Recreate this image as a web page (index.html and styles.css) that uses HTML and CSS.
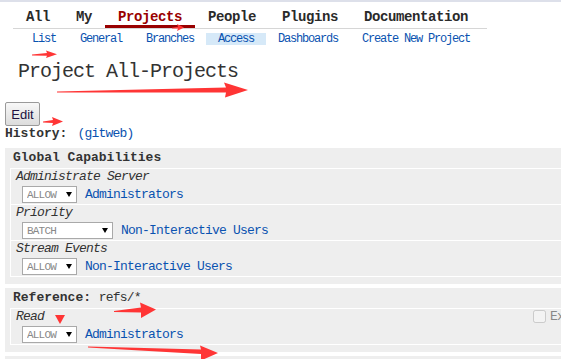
FILE: index.html
```html
<!DOCTYPE html>
<html lang="en">

<head>
  <meta charset="UTF-8">
  <title>Project All-Projects</title>
  <link rel="stylesheet" href="styles.css">
</head>

<body>
  <div class="page">
    <div class="topnav">
      <a class="tab">All</a>
      <a class="tab">My</a>
      <a class="tab selected">Projects</a>
      <a class="tab">People</a>
      <a class="tab">Plugins</a>
      <a class="tab">Documentation</a>
    </div>

    <div class="subnav">
      <a>List</a>
      <a>General</a>
      <a>Branches</a>
      <a class="active">Access</a>
      <a>Dashboards</a>
      <a>Create New Project</a>
    </div>

    <h1 class="title">Project All-Projects</h1>

    <button class="edit">Edit</button>
    <div class="history"><b>History:</b> <a class="link gitweb">(gitweb)</a></div>

    <div class="section">
      <h3>Global Capabilities</h3>
      <div class="perms">
        <div class="perm">
          <div class="perm-head"><i>Administrate Server</i></div>
          <div class="rule">
            <span class="pick"><select class="narrow"><option>ALLOW</option></select></span>
            <a class="link">Administrators</a>
          </div>
        </div>
        <div class="perm">
          <div class="perm-head"><i>Priority</i></div>
          <div class="rule">
            <span class="pick"><select class="wide"><option>BATCH</option></select></span>
            <a class="link">Non-Interactive Users</a>
          </div>
        </div>
        <div class="perm">
          <div class="perm-head"><i>Stream Events</i></div>
          <div class="rule">
            <span class="pick"><select class="narrow"><option>ALLOW</option></select></span>
            <a class="link">Non-Interactive Users</a>
          </div>
        </div>
      </div>
    </div>

    <div class="section">
      <h3>Reference: <span class="refname">refs/*</span></h3>
      <div class="perms">
        <div class="perm">
          <div class="perm-head">
            <i>Read</i>
            <label class="exclusive"><input type="checkbox" disabled>Exclusive</label>
          </div>
          <div class="rule">
            <span class="pick"><select class="narrow"><option>ALLOW</option></select></span>
            <a class="link">Administrators</a>
          </div>
        </div>
      </div>
    </div>

    <!-- next section starts just below the fold -->
    <div class="section empty"></div>
  </div>

  <!-- red arrows drawn over the screenshot -->
  <svg class="marks" width="561" height="359" viewBox="0 0 561 359">
    <polygon points="172,25.8 178,24.8 177,22 184,25.5 177,29 178,26.6 172,26.4" />
    <polygon points="32,52.6 47,51 46,48.5 57,52.2 46,56 47,53.8 32,53.4" />
    <polygon points="57,89.5 226,85.5 224,80.5 248,88 225,95.5 226,90.5 57,90.5" />
    <polygon points="43,119.6 53,118 52,115 63,119.5 52,124 53,121 43,120.4" />
    <polygon points="114,309 141,305.5 140,300.5 156,307.5 141,316 141,310.5 114,310" />
    <polygon points="55,313 65,313 60,322" />
    <polygon points="88,344.6 201,347.5 200,343.5 218,351 201,358.5 201,352 88,345.6" />
  </svg>
</body>

</html>
```

FILE: styles.css
```css
html,
body {
  overflow: hidden;
}

body {
  margin: 0;
  position: relative;
  border-top: 2px solid #dde0ea;
  color: #333;
  font-family: 'Liberation Mono', 'DejaVu Sans Mono', monospace;
  font-size: 13px;
  letter-spacing: -0.8px;
}

.page {
  padding-left: 5px;
}

.link,
.subnav a {
  color: #0a52b0;
  text-decoration: none;
}

/* top tabs */
.topnav {
  display: inline-flex;
  margin: 8px 0 0 8px;
  padding-right: 6px;
  border-bottom: 1px solid #d6d6d6;
}

.tab {
  padding: 0 13px;
  line-height: 15px;
  font-size: 14px;
  font-weight: bold;
  letter-spacing: -0.4px;
  color: #2a2a2a;
  border-bottom: 3px solid transparent;
}

.tab.selected {
  color: #990000;
  border-bottom-color: #990000;
}

/* second row of links */
.subnav {
  display: flex;
  margin: 4px 0 0 15px;
}

.subnav a {
  padding: 0 12px;
  line-height: 12px;
  font-size: 12px;
  letter-spacing: -1.2px;
}

.subnav a.active {
  background: #d6e9f8;
}

.title {
  margin: 15px 0 0 13px;
  font-size: 20px;
  line-height: 24px;
  font-weight: normal;
  letter-spacing: -1px;
  color: #333;
}

.edit {
  display: block;
  width: 35px;
  height: 24px;
  margin-top: 18px;
  padding: 0;
  font-family: 'Liberation Sans', Arial, sans-serif;
  font-size: 13px;
  letter-spacing: 0;
  color: #201040;
  border: 1px solid #9a9a9a;
  border-radius: 2px;
  background: linear-gradient(#f8f8f8, #dcdcdc);
}

.history {
  margin-top: 1px;
  line-height: 13px;
}

.history b,
.section h3 {
  letter-spacing: 0;
}

.gitweb {
  margin-left: 3px;
}

/* access sections */
.section {
  width: 612px;
  margin-top: 8px;
  padding: 2px 0 7px;
  background: #eee;
}

.section + .section {
  margin-top: 4px;
}

.section.empty {
  height: 40px;
}

.section h3 {
  margin: 0;
  padding-left: 8px;
  font-size: 13px;
  line-height: 16px;
}

.refname {
  font-weight: normal;
  letter-spacing: -0.8px;
}

.perms {
  margin: 2px 0 0 5px;
  border-top: 1px solid #fff;
  border-left: 1px solid #fff;
}

.perm {
  padding: 1px 4px 1px 5px;
  border-bottom: 1px solid #fff;
}

.perm-head {
  display: flex;
  align-items: center;
  line-height: 13px;
}

.exclusive {
  display: flex;
  align-items: center;
  margin-left: auto;
  color: #888;
}

.exclusive input {
  width: 13px;
  height: 13px;
  margin: 0 4px 0 0;
}

.rule {
  display: flex;
  align-items: center;
  margin: 3px 0 0 6px;
}

.rule .link {
  margin-left: 8px;
}

.pick {
  position: relative;
  display: block;
}

.pick select {
  display: block;
  -webkit-appearance: none;
  appearance: none;
  height: 17px;
  padding: 0 0 0 4px;
  border: 1px solid #a9a9a9;
  border-radius: 0;
  background: #fff;
  color: #888;
  font-family: 'Liberation Mono', monospace;
  font-size: 11px;
  letter-spacing: -0.8px;
}

.pick select.narrow {
  width: 55px;
}

.pick select.wide {
  width: 91px;
}

/* the little black arrow of the select */
.pick::after {
  content: "";
  position: absolute;
  top: 6px;
  right: 5px;
  border-left: 3.5px solid transparent;
  border-right: 3.5px solid transparent;
  border-top: 5px solid #000;
}

.marks {
  position: absolute;
  top: 0;
  left: 0;
  pointer-events: none;
}

.marks polygon {
  fill: #ff3535;
}
```
